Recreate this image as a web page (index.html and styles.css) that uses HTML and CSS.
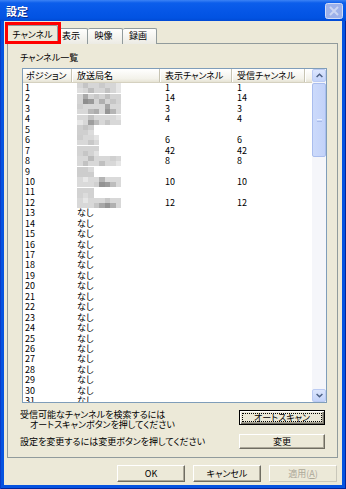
FILE: index.html
```html
<!DOCTYPE html>
<html lang="ja">
<head>
  <meta charset="UTF-8" />
  <meta name="viewport" content="width=device-width, initial-scale=1.0" />
  <title>設定</title>
  <link rel="stylesheet" href="styles.css">
</head>
<body>
  <div class="window">
    <div class="titlebar">
      <span class="title">設定</span>
      <span class="close-btn">
        <svg width="18" height="16" viewBox="0 0 18 16">
          <rect x="0.5" y="0.5" width="17" height="15" rx="2" fill="#9DB1EA" stroke="#D3DCF6"/>
          <path d="M5 4 L13 12 M13 4 L5 12" stroke="#CCD6F3" stroke-width="2"/>
        </svg>
      </span>
    </div>

    <div class="client">
      <div class="tabs">
        <div class="tab tab-selected">チャンネル</div>
        <div class="tab tab-view">表示</div>
        <div class="tab tab-video">映像</div>
        <div class="tab tab-rec">録画</div>
      </div>

      <div class="panel">
        <div class="group-label">チャンネル一覧</div>

        <div class="listview">
          <div class="list-content">
            <div class="list-header">
              <div class="hcell hcell-first">ポジション</div>
              <div class="hcell">放送局名</div>
              <div class="hcell">表示チャンネル</div>
              <div class="hcell">受信チャンネル</div>
              <div class="hcell hcell-fill"></div>
            </div>

            <div class="list-body">
              <div class="row"><span class="cell-pos">1</span><span class="cell">
                <svg class="mosaic" width="44" height="10" viewBox="0 0 8 2" preserveAspectRatio="none" shape-rendering="crispEdges"><rect width="8" height="2" fill="#d6d6d6"/><rect x="1" width="1" height="1" fill="#c4c4c4"/><rect x="2" y="1" width="1" height="1" fill="#bdbdbd"/><rect x="4" width="1" height="1" fill="#cacaca"/><rect x="5" y="1" width="1" height="1" fill="#c2c2c2"/><rect x="7" width="1" height="2" fill="#e6e6e6"/><rect y="1" width="1" height="1" fill="#dedede"/></svg>
              </span><span class="cell">1</span><span class="cell">1</span></div>
              <div class="row"><span class="cell-pos">2</span><span class="cell">
                <svg class="mosaic" width="44" height="10" viewBox="0 0 8 2" preserveAspectRatio="none" shape-rendering="crispEdges"><rect width="8" height="2" fill="#d4d4d4"/><rect x="1" width="1" height="1" fill="#a9a9a9"/><rect x="1" y="1" width="1" height="1" fill="#8e8e8e"/><rect x="2" y="1" width="1" height="1" fill="#9a9a9a"/><rect x="3" width="1" height="1" fill="#c8c8c8"/><rect x="4" y="1" width="1" height="1" fill="#b0b0b0"/><rect x="5" width="1" height="1" fill="#bfbfbf"/><rect x="6" y="1" width="1" height="1" fill="#c6c6c6"/></svg>
              </span><span class="cell">14</span><span class="cell">14</span></div>
              <div class="row"><span class="cell-pos">3</span><span class="cell">
                <svg class="mosaic" width="44" height="10" viewBox="0 0 8 2" preserveAspectRatio="none" shape-rendering="crispEdges"><rect width="8" height="2" fill="#d8d8d8"/><rect width="1" height="1" fill="#cfcfcf"/><rect x="2" y="1" width="1" height="1" fill="#b8b8b8"/><rect x="3" y="1" width="1" height="1" fill="#adadad"/><rect x="5" width="1" height="1" fill="#a5a5a5"/><rect x="5" y="1" width="1" height="1" fill="#969696"/><rect x="6" y="1" width="1" height="1" fill="#b5b5b5"/></svg>
              </span><span class="cell">3</span><span class="cell">3</span></div>
              <div class="row"><span class="cell-pos">4</span><span class="cell">
                <svg class="mosaic" width="44" height="10" viewBox="0 0 8 2" preserveAspectRatio="none" shape-rendering="crispEdges"><rect width="8" height="2" fill="#d8d8d8"/><rect y="1" width="1" height="1" fill="#e6e6e6"/><rect x="2" width="1" height="1" fill="#c2c2c2"/><rect x="2" y="1" width="1" height="1" fill="#9e9e9e"/><rect x="3" y="1" width="1" height="1" fill="#bcbcbc"/><rect x="5" y="1" width="1" height="1" fill="#c6c6c6"/><rect x="7" width="1" height="1" fill="#e2e2e2"/></svg>
              </span><span class="cell">4</span><span class="cell">4</span></div>
              <div class="row"><span class="cell-pos">5</span><span class="cell">
                <svg class="mosaic" width="17" height="10" viewBox="0 0 3 2" preserveAspectRatio="none" shape-rendering="crispEdges"><rect width="3" height="2" fill="#cfcfcf"/><rect x="1" width="1" height="1" fill="#c4c4c4"/><rect x="2" y="1" width="1" height="1" fill="#dcdcdc"/></svg>
              </span><span class="cell"></span><span class="cell"></span></div>
              <div class="row"><span class="cell-pos">6</span><span class="cell">
                <svg class="mosaic" width="22" height="10" viewBox="0 0 4 2" preserveAspectRatio="none" shape-rendering="crispEdges"><rect width="4" height="2" fill="#d8d8d8"/><rect width="1" height="1" fill="#cdcdcd"/><rect x="2" y="1" width="1" height="1" fill="#c8c8c8"/><rect x="3" width="1" height="1" fill="#e4e4e4"/></svg>
              </span><span class="cell">6</span><span class="cell">6</span></div>
              <div class="row"><span class="cell-pos">7</span><span class="cell">
                <svg class="mosaic" width="22" height="10" viewBox="0 0 4 2" preserveAspectRatio="none" shape-rendering="crispEdges"><rect width="4" height="2" fill="#d3d3d3"/><rect x="1" y="1" width="1" height="1" fill="#c6c6c6"/><rect x="3" y="1" width="1" height="1" fill="#e2e2e2"/></svg>
              </span><span class="cell">42</span><span class="cell">42</span></div>
              <div class="row"><span class="cell-pos">8</span><span class="cell">
                <svg class="mosaic" width="44" height="10" viewBox="0 0 8 2" preserveAspectRatio="none" shape-rendering="crispEdges"><rect width="8" height="2" fill="#d8d8d8"/><rect x="1" y="1" width="1" height="1" fill="#c2c2c2"/><rect x="2" width="1" height="1" fill="#bbbbbb"/><rect x="4" y="1" width="1" height="1" fill="#c0c0c0"/><rect x="6" width="1" height="1" fill="#d0d0d0"/><rect x="7" y="1" width="1" height="1" fill="#e6e6e6"/></svg>
              </span><span class="cell">8</span><span class="cell">8</span></div>
              <div class="row"><span class="cell-pos">9</span><span class="cell">
                <svg class="mosaic" width="17" height="10" viewBox="0 0 3 2" preserveAspectRatio="none" shape-rendering="crispEdges"><rect width="3" height="2" fill="#cdcdcd"/><rect x="2" width="1" height="1" fill="#dadada"/></svg>
              </span><span class="cell"></span><span class="cell"></span></div>
              <div class="row"><span class="cell-pos">10</span><span class="cell">
                <svg class="mosaic" width="44" height="10" viewBox="0 0 8 2" preserveAspectRatio="none" shape-rendering="crispEdges"><rect width="8" height="2" fill="#dadada"/><rect x="1" width="1" height="1" fill="#e8e8e8"/><rect x="3" y="1" width="1" height="1" fill="#d0d0d0"/><rect x="4" width="1" height="1" fill="#b4b4b4"/><rect x="4" y="1" width="1" height="1" fill="#939393"/><rect x="5" y="1" width="1" height="1" fill="#9c9c9c"/><rect x="6" y="1" width="1" height="1" fill="#bdbdbd"/></svg>
              </span><span class="cell">10</span><span class="cell">10</span></div>
              <div class="row"><span class="cell-pos">11</span><span class="cell">
                <svg class="mosaic" width="17" height="10" viewBox="0 0 3 2" preserveAspectRatio="none" shape-rendering="crispEdges"><rect width="3" height="2" fill="#d2d2d2"/><rect x="1" y="1" width="1" height="1" fill="#dcdcdc"/></svg>
              </span><span class="cell"></span><span class="cell"></span></div>
              <div class="row"><span class="cell-pos">12</span><span class="cell">
                <svg class="mosaic" width="44" height="10" viewBox="0 0 8 2" preserveAspectRatio="none" shape-rendering="crispEdges"><rect width="8" height="2" fill="#d8d8d8"/><rect x="1" width="1" height="1" fill="#e6e6e6"/><rect x="3" y="1" width="1" height="1" fill="#c6c6c6"/><rect x="4" y="1" width="1" height="1" fill="#a8a8a8"/><rect x="5" width="1" height="1" fill="#c8c8c8"/><rect x="5" y="1" width="1" height="1" fill="#949494"/><rect x="6" y="1" width="1" height="1" fill="#b0b0b0"/></svg>
              </span><span class="cell">12</span><span class="cell">12</span></div>
              <div class="row"><span class="cell-pos">13</span><span class="cell">なし</span></div>
              <div class="row"><span class="cell-pos">14</span><span class="cell">なし</span></div>
              <div class="row"><span class="cell-pos">15</span><span class="cell">なし</span></div>
              <div class="row"><span class="cell-pos">16</span><span class="cell">なし</span></div>
              <div class="row"><span class="cell-pos">17</span><span class="cell">なし</span></div>
              <div class="row"><span class="cell-pos">18</span><span class="cell">なし</span></div>
              <div class="row"><span class="cell-pos">19</span><span class="cell">なし</span></div>
              <div class="row"><span class="cell-pos">20</span><span class="cell">なし</span></div>
              <div class="row"><span class="cell-pos">21</span><span class="cell">なし</span></div>
              <div class="row"><span class="cell-pos">22</span><span class="cell">なし</span></div>
              <div class="row"><span class="cell-pos">23</span><span class="cell">なし</span></div>
              <div class="row"><span class="cell-pos">24</span><span class="cell">なし</span></div>
              <div class="row"><span class="cell-pos">25</span><span class="cell">なし</span></div>
              <div class="row"><span class="cell-pos">26</span><span class="cell">なし</span></div>
              <div class="row"><span class="cell-pos">27</span><span class="cell">なし</span></div>
              <div class="row"><span class="cell-pos">28</span><span class="cell">なし</span></div>
              <div class="row"><span class="cell-pos">29</span><span class="cell">なし</span></div>
              <div class="row"><span class="cell-pos">30</span><span class="cell">なし</span></div>
              <div class="row"><span class="cell-pos">31</span><span class="cell">なし</span></div>
            </div>
          </div>

          <div class="scrollbar">
            <div class="sb-btn">
              <svg width="7" height="5" viewBox="0 0 7 5"><path d="M0.6 4 L3.5 1.2 L6.4 4" fill="none" stroke="#4D6185" stroke-width="1.5"/></svg>
            </div>
            <div class="sb-thumb"><span class="grip"></span></div>
            <div class="sb-track"></div>
            <div class="sb-btn">
              <svg width="7" height="5" viewBox="0 0 7 5"><path d="M0.6 1 L3.5 3.8 L6.4 1" fill="none" stroke="#4D6185" stroke-width="1.5"/></svg>
            </div>
          </div>
        </div>

        <div class="info-row">
          <p class="info">受信可能なチャンネルを検索するには<span class="info-indent">オートスキャンボタンを押してください</span></p>
          <button class="btn btn-side btn-default">オートスキャン</button>
        </div>
        <div class="info-row info-row-center">
          <p class="info">設定を変更するには変更ボタンを押してください</p>
          <button class="btn btn-side">変更</button>
        </div>
      </div>

      <div class="dialog-buttons">
        <button class="btn">OK</button>
        <button class="btn">キャンセル</button>
        <button class="btn" disabled>適用(<u>A</u>)</button>
      </div>
    </div>

    <div class="highlight"></div>
  </div>
</body>
</html>
```

FILE: styles.css
```css
* {
  box-sizing: border-box;
}

body {
  margin: 0;
  font-family: "Noto Sans CJK JP", "Noto Sans", sans-serif;
  font-size: 9px;
  font-feature-settings: "palt";
  color: #000;
  background: #ECE9D8;
}

/* window frame */
.window {
  position: relative;
  width: 346px;
  height: 489px;
  display: flex;
  flex-direction: column;
  background: #0553E0;
  box-shadow: inset 1px 0 #0A3CC8, inset -1px 0 #00249C, inset 0 -1px #00249C;
}

.titlebar {
  height: 21px;
  display: flex;
  align-items: flex-start;
  justify-content: space-between;
  padding: 0 3px 0 6px;
  background: linear-gradient(#3C83F5 0%, #0C5EEB 14%, #0657E7 50%, #0253E2 85%, #0049D4 100%);
}

.title {
  margin-top: 5px;
  color: #fff;
  font-size: 11px;
  font-weight: bold;
  line-height: 13px;
  text-shadow: 1px 1px #0A2A8C;
}

.close-btn {
  margin-top: 3px;
  display: flex;
}

.client {
  flex: 1;
  margin: 0 4px 4px;
  padding: 4px 4px 3px 3px;
  display: flex;
  flex-direction: column;
  background: #ECE9D8;
}

/* tabs */
.tabs {
  display: flex;
  align-items: flex-end;
  height: 19px;
  margin-bottom: -1px;
  position: relative;
  z-index: 1;
}

.tab {
  height: 16px;
  line-height: 14px;
  padding-right: 3px;
  text-align: center;
  border: 1px solid #919B9C;
  border-bottom: none;
  border-left: none;
  border-radius: 2px 2px 0 0;
  background: linear-gradient(#FEFEFD, #ECEBE4);
}

.tab-selected {
  width: 51px;
  height: 19px;
  padding: 2px 0 0;
  border-left: 1px solid #919B9C;
  background: #ECE9D8;
}

.tab-view { width: 30px; }
.tab-video { width: 35px; }
.tab-rec { width: 34px; }

.panel {
  flex: 1;
  display: flex;
  flex-direction: column;
  padding: 8px 12px;
  border: 1px solid #919B9C;
  background: #ECE9D8;
}

.group-label {
  line-height: 12px;
}

/* list view */
.listview {
  display: flex;
  width: 305px;
  height: 335px;
  margin: 4px 0 0 2px;
  border: 1px solid #7F9DB9;
  background: #fff;
}

.list-content {
  flex: 1;
  overflow: hidden;
}

.list-header,
.row {
  display: grid;
  grid-template-columns: 49px 88px 72px 73px 7px;
}

.list-header {
  height: 14px;
  line-height: 13px;
  border-bottom: 1px solid #D5D1C0;
  background: linear-gradient(#FFFFFF, #F3F2EA 75%, #E6E3D4);
}

.hcell {
  padding-left: 5px;
  white-space: nowrap;
  border-right: 1px solid #C7C4B3;
  box-shadow: 1px 0 #fff;
}

.hcell-first {
  padding-left: 3px;
}

.hcell-fill {
  border-right: none;
  box-shadow: none;
}

.row {
  height: 10.45px;
  line-height: 10.45px;
}

.cell-pos {
  padding-left: 2px;
}

.cell {
  padding-left: 5px;
  white-space: nowrap;
}

.mosaic {
  display: block;
  margin-top: 0.2px;
}

/* scrollbar */
.scrollbar {
  width: 14px;
  display: flex;
  flex-direction: column;
  background: #F5F6FA;
}

.sb-btn {
  height: 13px;
  display: flex;
  align-items: center;
  justify-content: center;
  border: 1px solid #BBCBF3;
  border-radius: 2px;
  background: linear-gradient(#DCE6FD, #C3D3FA);
}

.sb-thumb {
  height: 74px;
  margin-top: 1px;
  display: flex;
  align-items: center;
  justify-content: center;
  border: 1px solid #A9BDEE;
  border-radius: 2px;
  background: linear-gradient(90deg, #CCDAFB, #C2D2F9);
}

.grip {
  width: 5px;
  height: 3px;
  border-top: 1px solid #EEF3FE;
  border-bottom: 1px solid #A8BBEA;
}

.sb-track {
  flex: 1;
}

/* bottom of panel */
.info-row {
  display: flex;
  justify-content: space-between;
  align-items: flex-start;
  margin-top: 7px;
}

.info-row-center {
  align-items: center;
  margin-top: 4px;
}

.info {
  margin: 0;
  line-height: 10px;
}

.info-indent {
  display: block;
  padding-left: 10px;
}

.btn {
  width: 68px;
  height: 17px;
  padding: 0;
  font: inherit;
  color: #000;
  background: #ECE9D8;
  border: 1px solid;
  border-color: #FFFFFF #6F6D62 #6F6D62 #FFFFFF;
  box-shadow: inset -1px -1px #ACA899;
}

.btn-side {
  width: 86px;
  height: 15px;
}

.btn-default {
  border-color: #000;
  box-shadow: inset 1px 1px #fff, inset -1px -1px #6F6D62, inset -2px -2px #ACA899;
  outline: 1px dotted #000;
  outline-offset: -4px;
}

.btn:disabled {
  color: #ACA899;
  border-color: #FFFFFF #C9C7BA #C9C7BA #FFFFFF;
  box-shadow: none;
}

.dialog-buttons {
  display: flex;
  justify-content: flex-end;
  gap: 8px;
  margin-top: 7px;
  padding-right: 1px;
}

/* red annotation box over the first tab */
.highlight {
  position: absolute;
  z-index: 2;
  left: 5px;
  top: 22px;
  width: 56px;
  height: 22px;
  border: 3px solid #FF0000;
}
```
